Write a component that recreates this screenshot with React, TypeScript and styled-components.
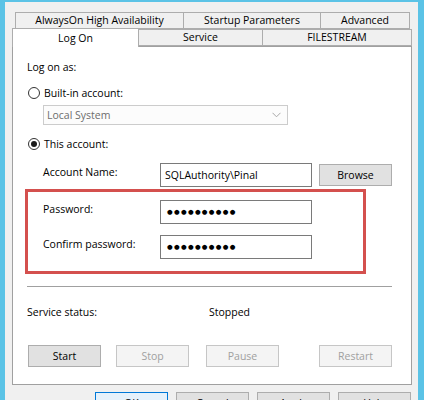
import React from 'react';
import styled, { createGlobalStyle } from 'styled-components';

const GlobalStyle = createGlobalStyle`
    html, body {
        margin: 0;
        padding: 0;
    }
    body {
        width: 424px;
        height: 400px;
        overflow: hidden;
        background: #f0f0f0;
        font-family: "Open Sans", "Noto Sans", sans-serif;
        font-size: 10.5px;
        color: #000;
    }
`;

const Window = styled.div`
    box-sizing: border-box;
    width: 424px;
    height: 400px;
    overflow: hidden;
    background: #f0f0f0;
    border-top: 2px solid #5bc3e6;
    border-left: 5px solid #5bc3e6;
    border-right: 6px solid #5bc3e6;
    padding: 10px 0 0 7px;
`;

const TabRow = styled.div<{ $indent?: number }>`
    display: flex;
    align-items: flex-end;
    padding-left: ${p => p.$indent || 0}px;
    height: 17px;
`;

const Tab = styled.div<{ $w: number; $active?: boolean }>`
    box-sizing: border-box;
    width: ${p => p.$w}px;
    height: ${p => (p.$active ? 19 : 17)}px;
    margin-left: -1px;
    margin-bottom: ${p => (p.$active ? -1 : 0)}px;
    position: relative;
    z-index: ${p => (p.$active ? 2 : 1)};
    display: flex;
    align-items: center;
    justify-content: center;
    background: ${p => (p.$active ? '#ffffff' : '#f0f0f0')};
    border: 1px solid #adadad;
    border-bottom: ${p => (p.$active ? 'none' : '1px solid #adadad')};
    line-height: 1;
    &:first-child {
        margin-left: 0;
    }
`;

const Panel = styled.div`
    box-sizing: border-box;
    width: 400px;
    height: 339px;
    background: #fff;
    border: 1px solid #a0a0a0;
    padding: 0 0 0 14px;
    display: flex;
    flex-direction: column;
`;

const Text = styled.div<{ $top?: number; $width?: number }>`
    height: 16px;
    line-height: 16px;
    margin-top: ${p => p.$top || 0}px;
    width: ${p => (p.$width ? `${p.$width}px` : 'auto')};
    flex-shrink: 0;
    white-space: nowrap;
`;

const RadioRow = styled.label<{ $top: number }>`
    display: flex;
    align-items: center;
    gap: 4px;
    height: 16px;
    margin-top: ${p => p.$top}px;
    margin-left: 1px;
`;

const Radio = styled.span<{ $checked?: boolean }>`
    box-sizing: border-box;
    width: 12px;
    height: 12px;
    border-radius: 50%;
    border: 1px solid #333;
    background: #fff;
    display: flex;
    align-items: center;
    justify-content: center;
    &::after {
        content: '';
        display: ${p => (p.$checked ? 'block' : 'none')};
        width: 6px;
        height: 6px;
        border-radius: 50%;
        background: #1a1a1a;
    }
`;

const Select = styled.div`
    box-sizing: border-box;
    width: 245px;
    height: 20px;
    margin: 4px 0 0 16px;
    border: 1px solid #cccccc;
    background: #fcfcfc;
    color: #6d6d6d;
    display: flex;
    align-items: center;
    justify-content: space-between;
    padding: 0 6px 0 3px;
`;

const FieldRow = styled.div<{ $top: number }>`
    display: flex;
    align-items: flex-start;
    margin-top: ${p => p.$top}px;
`;

const FieldLabel = styled.div<{ $indent?: number }>`
    width: 117px;
    height: 16px;
    line-height: 16px;
    margin-top: 1px;
    margin-left: ${p => p.$indent || 0}px;
    white-space: nowrap;
`;

const TextBox = styled.div`
    box-sizing: border-box;
    width: 152px;
    height: 24px;
    border: 1px solid #7a7a7a;
    background: #fff;
    display: flex;
    align-items: center;
    padding: 0 4px;
    white-space: nowrap;
`;

const Dots = styled.span`
    font-family: "DejaVu Sans", sans-serif;
    font-size: 6.5px;
    letter-spacing: 1.3px;
    padding-left: 2px;
`;

const Highlight = styled.div`
    box-sizing: border-box;
    width: 341px;
    height: 85px;
    margin: 2px 0 0 -2px;
    border: 3px solid #d4504e;
    padding: 8px 0 0 15px;
    display: flex;
    flex-direction: column;
    gap: 11px;
`;

const Separator = styled.div`
    width: 365px;
    height: 1px;
    background: #a0a0a0;
    margin-top: 12px;
`;

const StatusRow = styled.div`
    display: flex;
    margin-top: 17px;
`;

const ButtonRow = styled.div`
    display: flex;
    margin-top: 25px;
    padding-left: 1px;
`;

const Button = styled.div<{ $disabled?: boolean; $default?: boolean; $left?: number; $top?: number }>`
    box-sizing: border-box;
    width: 73px;
    height: 22px;
    flex-shrink: 0;
    margin-left: ${p => p.$left || 0}px;
    margin-top: ${p => p.$top || 0}px;
    display: flex;
    align-items: center;
    justify-content: center;
    background: ${p => (p.$disabled ? '#f4f4f4' : p.$default ? '#e5f1fb' : '#e1e1e1')};
    border: 1px solid ${p => (p.$disabled ? '#c6c6c6' : p.$default ? '#0078d7' : '#adadad')};
    color: ${p => (p.$disabled ? '#a0a0a0' : '#000')};
`;

const DialogButtons = styled.div`
    display: flex;
    justify-content: flex-end;
    gap: 8px;
    width: 399px;
    margin-top: 7px;
`;

const Chevron = () => (
    <svg width="9" height="6" viewBox="0 0 9 6">
        <path d="M0.5 0.8 L4.5 4.8 L8.5 0.8" fill="none" stroke="#a8a8a8" strokeWidth="1" />
    </svg>
);

const App = () => {
    return (
        <>
            <GlobalStyle />
            <Window>
                <TabRow $indent={3}>
                    <Tab $w={169}>AlwaysOn High Availability</Tab>
                    <Tab $w={138}>Startup Parameters</Tab>
                    <Tab $w={90}>Advanced</Tab>
                </TabRow>
                <TabRow>
                    <Tab $w={127} $active>Log On</Tab>
                    <Tab $w={125}>Service</Tab>
                    <Tab $w={150}>FILESTREAM</Tab>
                </TabRow>
                <Panel>
                    <Text $top={12}>Log on as:</Text>
                    <RadioRow $top={10}>
                        <Radio />
                        Built-in account:
                    </RadioRow>
                    <Select>
                        <span>Local System</span>
                        <Chevron />
                    </Select>
                    <RadioRow $top={11}>
                        <Radio $checked />
                        This account:
                    </RadioRow>
                    <FieldRow $top={11}>
                        <FieldLabel $indent={16}>Account Name:</FieldLabel>
                        <TextBox>SQLAuthority\Pinal</TextBox>
                        <Button $left={7} $top={1}>Browse</Button>
                    </FieldRow>
                    <Highlight>
                        <FieldRow $top={0}>
                            <FieldLabel>Password:</FieldLabel>
                            <TextBox>
                                <Dots>●●●●●●●●●●</Dots>
                            </TextBox>
                        </FieldRow>
                        <FieldRow $top={0}>
                            <FieldLabel>Confirm password:</FieldLabel>
                            <TextBox>
                                <Dots>●●●●●●●●●●</Dots>
                            </TextBox>
                        </FieldRow>
                    </Highlight>
                    <Separator />
                    <StatusRow>
                        <Text $width={182}>Service status:</Text>
                        <Text>Stopped</Text>
                    </StatusRow>
                    <ButtonRow>
                        <Button>Start</Button>
                        <Button $disabled $left={15}>Stop</Button>
                        <Button $disabled $left={17}>Pause</Button>
                        <Button $disabled $left={40}>Restart</Button>
                    </ButtonRow>
                </Panel>
                <DialogButtons>
                    <Button $default>OK</Button>
                    <Button>Cancel</Button>
                    <Button>Apply</Button>
                    <Button>Help</Button>
                </DialogButtons>
            </Window>
        </>
    );
};

export default App;
